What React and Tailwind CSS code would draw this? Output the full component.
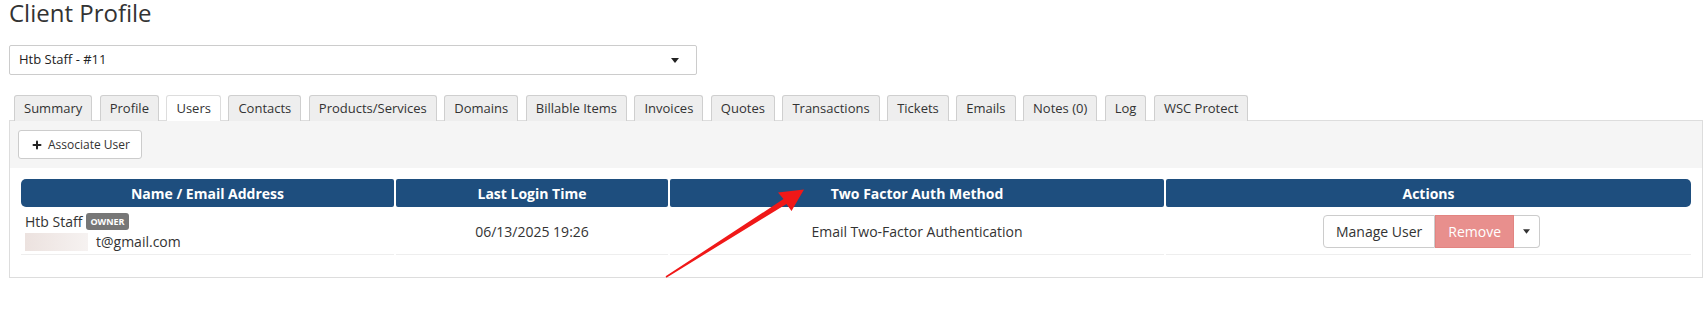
import { Plus } from "lucide-react";

const tabs = [
  "Summary",
  "Profile",
  "Users",
  "Contacts",
  "Products/Services",
  "Domains",
  "Billable Items",
  "Invoices",
  "Quotes",
  "Transactions",
  "Tickets",
  "Emails",
  "Notes (0)",
  "Log",
  "WSC Protect",
];

const columns = [
  { label: "Name / Email Address", round: "rounded-l-[5px] rounded-r-[2px]" },
  { label: "Last Login Time", round: "rounded-[2px]" },
  { label: "Two Factor Auth Method", round: "rounded-[2px]" },
  { label: "Actions", round: "rounded-r-[5px] rounded-l-[2px]" },
];

// caret used in the select and in the split button
const Caret = ({ className }) => (
  <svg width="8" height="5" viewBox="0 0 8 5" className={className}>
    <polygon points="0,0 8,0 4,5" fill="currentColor" />
  </svg>
);

function Tab({ label, active }) {
  return (
    <div
      className={`h-[26px] -mb-px px-[9px] flex items-center border border-b-0 rounded-t-[3px] text-[13px] text-[#333] ${
        active ? "bg-white border-[#ddd]" : "bg-[#eeeeee] border-[#cfcfcf] border-b border-b-[#ddd]"
      }`}
    >
      {label}
    </div>
  );
}

function UsersTable() {
  return (
    <div className="w-full">
      <div className="grid grid-cols-[373px_272px_494px_1fr] gap-x-[2px]">
        {columns.map((c) => (
          <div
            key={c.label}
            className={`h-[28px] bg-[#1e4e7e] text-white font-bold text-[14px] flex items-center justify-center ${c.round}`}
          >
            {c.label}
          </div>
        ))}
      </div>

      <div className="grid grid-cols-[373px_272px_494px_1fr] gap-x-[2px] mt-[2px] text-[14px] text-[#333]">
        <div className="h-[46px] border-b border-[#eee] pl-[4px] flex flex-col justify-center leading-[20px]">
          <div className="flex items-center">
            <span>Htb Staff</span>
            <span className="ml-[4px] h-[17px] px-[4px] rounded-[3px] bg-[#777] text-white text-[9px] font-bold flex items-center">
              OWNER
            </span>
          </div>
          <div className="flex items-center">
            <span className="inline-block w-[63px] h-[18px] mr-[8px] bg-linear-to-r from-[#ece2df] to-[#f6f2f1]" />
            <span>t@gmail.com</span>
          </div>
        </div>
        <div className="h-[46px] border-b border-[#eee] flex items-center justify-center">
          06/13/2025 19:26
        </div>
        <div className="h-[46px] border-b border-[#eee] flex items-center justify-center">
          Email Two-Factor Authentication
        </div>
        <div className="h-[46px] border-b border-[#eee] flex items-center justify-center pl-[6px]">
          <div className="flex h-[33px]">
            <button className="h-full px-[12px] border border-[#ccc] rounded-l-[4px] bg-white text-[#333]">
              Manage User
            </button>
            <button className="h-full px-[12px] border border-[#e28481] bg-[#e88f8d] text-white">
              Remove
            </button>
            <button className="h-full w-[26px] border border-l-0 border-[#ccc] rounded-r-[4px] bg-white flex items-center justify-center text-[#333]">
              <Caret className="w-[7px]" />
            </button>
          </div>
        </div>
      </div>
    </div>
  );
}

export default function App() {
  return (
    <div className="relative w-full h-[322px] bg-white font-['Open_Sans',sans-serif] text-[#333] pl-[9px] pr-[3px]">
      <h1 className="text-[24px] leading-[26px] font-normal text-[#333]">Client Profile</h1>

      <div className="mt-[19px] w-[688px] h-[30px] border border-[#ccc] rounded-[2px] flex items-center justify-between pl-[9px] pr-[17px] text-[13px] text-[#222]">
        <span>Htb Staff - #11</span>
        <Caret className="text-[#222]" />
      </div>

      <div className="mt-[20px] flex gap-[7.5px] pl-[5px] relative z-10">
        {tabs.map((t) => (
          <Tab key={t} label={t} active={t === "Users"} />
        ))}
      </div>

      <div className="border border-[#ddd]">
        <div className="bg-[#f5f5f5] pt-[9px] pb-[9px] pl-[8px]">
          <button className="h-[29px] pl-[12px] pr-[11px] flex items-center gap-[5px] border border-[#ccc] rounded-[3px] bg-white text-[12px] text-[#333]">
            <Plus size={12} strokeWidth={4} className="text-[#222]" />
            Associate User
          </button>
        </div>
        <div className="bg-white pt-[11px] pb-[22px] px-[11px]">
          <UsersTable />
        </div>
      </div>

      {/* red annotation arrow */}
      <svg
        className="absolute top-0 left-0 pointer-events-none"
        width="1706"
        height="322"
        viewBox="0 0 1706 322"
      >
        <polygon
          points="665.6,276.3 783.5,199.1 778,192.5 804,189.5 791.5,211 786.5,203.9 666.4,277.7"
          fill="#f01818"
        />
      </svg>
    </div>
  );
}
